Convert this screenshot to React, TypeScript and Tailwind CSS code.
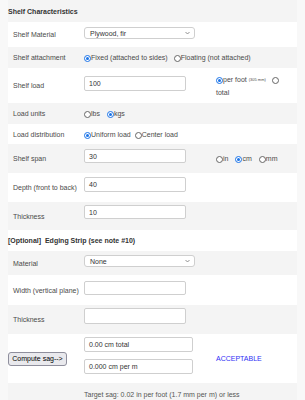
import React from "react";

const Radio = ({ checked }: { checked?: boolean }) =>
  checked ? (
    <span className="inline-flex w-[7px] h-[7px] shrink-0 rounded-full border border-[#1a73e8] bg-white items-center justify-center mt-[2px]">
      <span className="w-[3px] h-[3px] rounded-full bg-[#1a73e8]" />
    </span>
  ) : (
    <span className="inline-block w-[7px] h-[7px] shrink-0 rounded-full border border-[#666] bg-white mt-[2px]" />
  );

const Input = ({ value, w = "w-[102px]", h = "h-[15px]" }: { value?: string; w?: string; h?: string }) => (
  <div className={`${w} ${h} border border-[#cfcfcf] rounded-[2px] bg-white flex items-center pl-[4px] text-[#333]`}>
    {value}
  </div>
);

const Select = ({ value }: { value: string }) => (
  <div className="w-[111px] h-[12px] border border-[#cfcfcf] rounded-[3px] bg-white flex items-center justify-between pl-[5px] pr-[4px] text-[#333]">
    <span>{value}</span>
    <svg width="5" height="4" viewBox="0 0 5 4">
      <path d="M0.5 1 L2.5 3 L4.5 1" stroke="#777" strokeWidth="0.8" fill="none" />
    </svg>
  </div>
);

const Row = ({
  bg,
  h,
  label,
  children,
  third,
  top,
}: {
  bg: string;
  h: string;
  label?: React.ReactNode;
  children?: React.ReactNode;
  third?: React.ReactNode;
  top?: string;
}) => (
  <div className={`flex ${bg} ${h}`}>
    <div className="w-[76px] pl-[5px] flex items-center shrink-0">{label}</div>
    <div className={`w-[132px] shrink-0 flex ${top ? `items-start ${top}` : "items-center"}`}>{children}</div>
    <div className="flex-1 flex items-center">{third}</div>
  </div>
);

const RadioLabel = ({ checked, text, gap = "mr-[5px]" }: { checked?: boolean; text: string; gap?: string }) => (
  <span className={`inline-flex items-center ${gap}`}>
    <Radio checked={checked} />
    <span>{text}</span>
  </span>
);

export default function App() {
  const white = "bg-white";
  const gray = "bg-[#f4f4f4]";
  return (
    <div
      className="w-[305px] h-[400px] overflow-hidden bg-[#f8f8f8] text-[7px] text-[#4a4a4a] leading-[9px]"
      style={{ fontFamily: '"Liberation Sans", Arial, sans-serif' }}
    >
      <div className="mx-[8px]">
        <div className={`h-[22px] flex items-center pt-[1px] font-bold text-[#333] ${gray}`}>Shelf Characteristics</div>
        <Row bg={white} h="h-[25px]" label="Shelf Material" top="pt-[5px]">
          <Select value="Plywood, fir" />
        </Row>
        <div className={`flex ${gray} h-[21px]`}>
          <div className="w-[76px] pl-[5px] flex items-center shrink-0">Shelf attachment</div>
          <div className="flex items-center">
            <RadioLabel checked text="Fixed (attached to sides)" gap="mr-[6px]" />
            <RadioLabel text="Floating (not attached)" />
          </div>
        </div>
        <Row
          bg={white}
          h="h-[35px]"
          label="Shelf load"
          top="pt-[8px]"
          third={
            <div className="leading-[13px]">
              <div className="flex items-center">
                <Radio checked />
                <span>per foot</span>
                <span className="text-[4px] ml-[2px]">(305 mm)</span>
                <span className="ml-[6px] inline-flex">
                  <Radio />
                </span>
              </div>
              <div>total</div>
            </div>
          }
        >
          <Input value="100" />
        </Row>
        <div className={`flex ${gray} h-[21px]`}>
          <div className="w-[76px] pl-[5px] flex items-center shrink-0">Load units</div>
          <div className="flex items-center">
            <RadioLabel text="lbs" gap="mr-[7px]" />
            <RadioLabel checked text="kgs" />
          </div>
        </div>
        <div className={`flex ${white} h-[20px]`}>
          <div className="w-[76px] pl-[5px] flex items-center shrink-0">Load distribution</div>
          <div className="flex items-center">
            <RadioLabel checked text="Uniform load" gap="mr-[4px]" />
            <RadioLabel text="Center load" />
          </div>
        </div>
        <Row
          bg={gray}
          h="h-[29px]"
          label="Shelf span"
          top="pt-[5px]"
          third={
            <div className="flex items-center">
              <RadioLabel text="in" gap="mr-[7px]" />
              <RadioLabel checked text="cm" gap="mr-[7px]" />
              <RadioLabel text="mm" />
            </div>
          }
        >
          <Input value="30" h="h-[14px]" />
        </Row>
        <Row bg={white} h="h-[29px]" label="Depth (front to back)" top="pt-[4px]">
          <Input value="40" />
        </Row>
        <Row bg={gray} h="h-[28px]" label="Thickness" top="pt-[3px]">
          <Input value="10" h="h-[14px]" />
        </Row>
        <div className={`h-[21px] flex items-center font-bold text-[#333] whitespace-pre ${white}`}>
          {"[Optional]  Edging Strip (see note #10)"}
        </div>
        <Row bg={gray} h="h-[24px]" label="Material" top="pt-[4px]">
          <Select value="None" />
        </Row>
        <Row bg={white} h="h-[30px]" label="Width (vertical plane)" top="pt-[6px]">
          <Input h="h-[14px]" />
        </Row>
        <Row bg={gray} h="h-[29px]" label="Thickness" top="pt-[3px]">
          <Input h="h-[16px]" />
        </Row>
        <div className={`flex ${white} h-[49px]`}>
          <div className="w-[76px] flex items-center shrink-0">
            <div className="w-[59px] h-[14px] border border-[#8f8f9d] rounded-[3px] bg-[#e9e9ed] flex items-center justify-center text-black">
              Compute sag--&gt;
            </div>
          </div>
          <div className="w-[132px] shrink-0 flex flex-col pt-[3px] gap-[7px]">
            <Input value="0.00 cm total" w="w-[109px]" />
            <Input value="0.000 cm per m" w="w-[109px]" />
          </div>
          <div className="flex-1 flex items-center text-[#2f2ff5]">ACCEPTABLE</div>
        </div>
        <div className={`flex ${gray} h-[22px]`}>
          <div className="w-[76px] shrink-0" />
          <div className="flex items-center text-[#555]">Target sag: 0.02 in per foot (1.7 mm per m) or less</div>
        </div>
      </div>
    </div>
  );
}
